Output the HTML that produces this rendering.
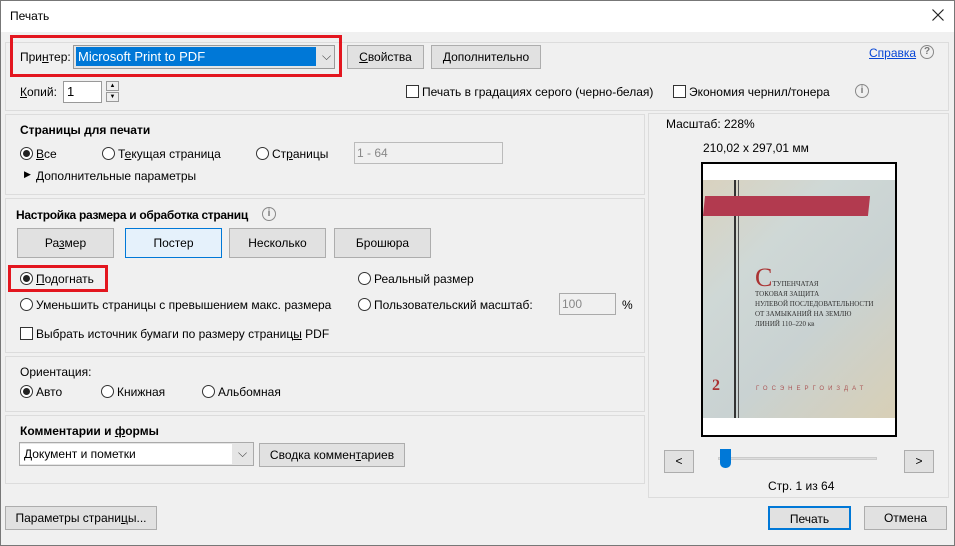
<!DOCTYPE html><html><head><meta charset="utf-8"><style>
*{box-sizing:border-box;margin:0;padding:0}
body{width:955px;height:546px;position:relative;background:#f0f0f0;font-family:"Liberation Sans",sans-serif;font-size:12px;color:#000;overflow:hidden}
.a{position:absolute;white-space:nowrap}
.panel{position:absolute;border:1px solid #dcdcdc}
.btn{position:absolute;background:#e1e1e1;border:1px solid #adadad;text-align:center}
.rad{position:absolute;width:13px;height:13px;border:1px solid #333;border-radius:50%;background:#fff}
.rad.on::after{content:"";position:absolute;left:2px;top:2px;width:7px;height:7px;border-radius:50%;background:#222}
.chk{position:absolute;width:13px;height:13px;border:1px solid #333;background:#fff}
.b{font-weight:bold}
u{text-decoration:underline}
.info{position:absolute;width:14px;height:14px;border:1px solid #888;border-radius:50%;color:#777;font-size:10px;text-align:center;line-height:12px;font-weight:bold}
</style></head><body>
<div style="position:absolute;inset:0;border:1px solid #777"></div>
<div class="a" style="left:1px;top:1px;width:953px;height:31px;background:#fff"></div>
<div class="a" style="left:10px;top:9px">Печать</div>
<svg class="a" style="left:932px;top:9px" width="12" height="12"><path d="M0.5 0.5L11.5 11.5M11.5 0.5L0.5 11.5" stroke="#222" stroke-width="1.2"/></svg>

<div class="panel" style="left:5px;top:42px;width:944px;height:69px"></div>
<div class="a" style="left:10px;top:35px;width:332px;height:42px;border:3px solid #e3161f"></div>
<div class="a" style="left:20px;top:50px">При<u>н</u>тер:</div>
<div class="a" style="left:73px;top:45px;width:262px;height:24px;border:1px solid #999;background:#e5e5e5"></div>
<div class="a" style="left:76px;top:47px;width:240px;height:19px;background:#0078d7;color:#fff;padding:2px 2px;font-size:13px">Microsoft Print to PDF</div>
<div class="a" style="left:322px;top:49px;color:#444">⌵</div>
<div class="btn" style="left:347px;top:45px;width:77px;height:24px;line-height:22px"><u>С</u>войства</div>
<div class="btn" style="left:431px;top:45px;width:110px;height:24px;line-height:22px"><u>Д</u>ополнительно</div>
<div class="a" style="left:869px;top:46px;color:#0645d6"><u>Справка</u></div>
<div class="info" style="left:920px;top:45px">?</div>
<div class="a" style="left:20px;top:85px"><u>К</u>опий:</div>
<div class="a" style="left:63px;top:81px;width:39px;height:22px;border:1px solid #999;background:#fff;padding:2px 3px;font-size:13px">1</div>
<div class="a" style="left:106px;top:81px;width:13px;height:10px;border:1px solid #999;background:#eee;font-size:6px;text-align:center;line-height:8px">▲</div>
<div class="a" style="left:106px;top:92px;width:13px;height:10px;border:1px solid #999;background:#eee;font-size:6px;text-align:center;line-height:8px">▼</div>
<div class="chk" style="left:406px;top:85px"></div>
<div class="a" style="left:422px;top:85px">Печать в градациях серого (черно-белая)</div>
<div class="chk" style="left:673px;top:85px"></div>
<div class="a" style="left:689px;top:85px">Экономия чернил/тонера</div>
<div class="info" style="left:855px;top:84px">i</div>

<div class="panel" style="left:5px;top:114px;width:640px;height:81px"></div>
<div class="a b" style="left:20px;top:123px">Страницы для печати</div>
<div class="rad on" style="left:20px;top:147px"></div><div class="a" style="left:36px;top:147px"><u>В</u>се</div>
<div class="rad" style="left:102px;top:147px"></div><div class="a" style="left:118px;top:147px">Т<u>е</u>кущая страница</div>
<div class="rad" style="left:256px;top:147px"></div><div class="a" style="left:272px;top:147px">Ст<u>р</u>аницы</div>
<div class="a" style="left:354px;top:142px;width:149px;height:22px;border:1px solid #bbb;background:#f0f0f0;color:#888;padding:3px 2px">1 - 64</div>
<div class="a" style="left:24px;top:169px;font-size:9px">▶</div><div class="a" style="left:36px;top:169px">Дополнительные параметры</div>

<div class="panel" style="left:5px;top:198px;width:640px;height:155px"></div>
<div class="a b" style="left:16px;top:208px;letter-spacing:-0.3px">Настройка размера и обработка страниц</div>
<div class="info" style="left:262px;top:207px">i</div>
<div class="btn" style="left:17px;top:228px;width:97px;height:30px;line-height:28px">Ра<u>з</u>мер</div>
<div class="btn" style="left:125px;top:228px;width:97px;height:30px;line-height:28px;background:#e5f1fb;border-color:#0078d7">Постер</div>
<div class="btn" style="left:229px;top:228px;width:97px;height:30px;line-height:28px">Несколько</div>
<div class="btn" style="left:334px;top:228px;width:97px;height:30px;line-height:28px">Брошюра</div>
<div class="a" style="left:8px;top:265px;width:100px;height:27px;border:3px solid #e3161f"></div>
<div class="rad on" style="left:20px;top:272px"></div><div class="a" style="left:36px;top:272px"><u>П</u>одогнать</div>
<div class="rad" style="left:358px;top:272px"></div><div class="a" style="left:374px;top:272px">Реальный размер</div>
<div class="rad" style="left:20px;top:298px"></div><div class="a" style="left:36px;top:298px">Уменьшить страницы с превышением макс. размера</div>
<div class="rad" style="left:358px;top:298px"></div><div class="a" style="left:374px;top:298px">Пользовательский масштаб:</div>
<div class="a" style="left:559px;top:293px;width:57px;height:22px;border:1px solid #aaa;background:#f0f0f0;color:#888;padding:3px 2px">100</div>
<div class="a" style="left:622px;top:298px">%</div>
<div class="chk" style="left:20px;top:327px"></div><div class="a" style="left:36px;top:327px">Выбрать источник бумаги по размеру страниц<u>ы</u> PDF</div>

<div class="panel" style="left:5px;top:356px;width:640px;height:56px"></div>
<div class="a" style="left:20px;top:365px">Ориентация:</div>
<div class="rad on" style="left:20px;top:385px"></div><div class="a" style="left:36px;top:385px">Авто</div>
<div class="rad" style="left:101px;top:385px"></div><div class="a" style="left:117px;top:385px">Книжная</div>
<div class="rad" style="left:202px;top:385px"></div><div class="a" style="left:218px;top:385px">Альбомная</div>

<div class="panel" style="left:5px;top:415px;width:640px;height:69px"></div>
<div class="a b" style="left:20px;top:424px">Комментарии и <u>ф</u>ормы</div>
<div class="a" style="left:19px;top:442px;width:235px;height:24px;border:1px solid #aaa;background:#e5e5e5"></div>
<div class="a" style="left:20px;top:444px;width:212px;height:20px;background:#fff;padding:3px 4px">Документ и пометки</div>
<div class="a" style="left:238px;top:446px;color:#444">⌵</div>
<div class="btn" style="left:259px;top:443px;width:146px;height:24px;line-height:22px">Сводка коммен<u>т</u>ариев</div>

<div class="btn" style="left:5px;top:506px;width:152px;height:24px;line-height:22px">Параметры страни<u>ц</u>ы...</div>
<div class="btn" style="left:768px;top:506px;width:83px;height:24px;line-height:22px;border:2px solid #0078d7">Печать</div>
<div class="btn" style="left:864px;top:506px;width:83px;height:24px;line-height:22px">Отмена</div>

<div class="panel" style="left:648px;top:113px;width:301px;height:385px"></div>
<div class="a" style="left:666px;top:117px">Масштаб: 228%</div>
<div class="a" style="left:703px;top:141px">210,02 x 297,01 мм</div>
<div class="a" style="left:701px;top:162px;width:196px;height:275px;border:2px solid #000;background:#fff"></div>
<div class="a" style="left:703px;top:180px;width:192px;height:238px;background:linear-gradient(135deg,#d9d2bf 0%,#cfd8d6 30%,#c9d2d2 60%,#d8cfb6 100%)"></div>
<div class="a" style="left:734px;top:180px;width:2px;height:238px;background:#333"></div>
<div class="a" style="left:738px;top:180px;width:1px;height:238px;background:#555"></div>
<div class="a" style="left:704px;top:196px;width:165px;height:20px;background:#b23a4f;transform:skewX(-6deg)"></div>
<div class="a" style="left:755px;top:269px;font-size:7px;line-height:10px;color:#333;font-family:'Liberation Serif',serif"><span style="font-size:26px;color:#a33;line-height:18px">С</span>ТУПЕНЧАТАЯ<br>ТОКОВАЯ ЗАЩИТА<br>НУЛЕВОЙ ПОСЛЕДОВАТЕЛЬНОСТИ<br>ОТ ЗАМЫКАНИЙ НА ЗЕМЛЮ<br>ЛИНИЙ 110–220 кв</div>
<div class="a" style="left:712px;top:377px;font-size:16px;color:#a33;font-weight:bold;font-family:'Liberation Serif',serif">2</div>
<div class="a" style="left:756px;top:386px;font-size:6px;letter-spacing:4px;color:#a55">ГОСЭНЕРГОИЗДАТ</div>
<div class="btn" style="left:664px;top:450px;width:30px;height:23px;line-height:21px">&lt;</div>
<div class="btn" style="left:904px;top:450px;width:30px;height:23px;line-height:21px">&gt;</div>
<div class="a" style="left:718px;top:457px;width:159px;height:3px;background:#ddd;border:1px solid #ccc"></div>
<div class="a" style="left:720px;top:449px;width:11px;height:19px;background:#0078d7;border-radius:0 0 5px 5px"></div>
<div class="a" style="left:768px;top:479px">Стр. 1 из 64</div>
</body></html>
